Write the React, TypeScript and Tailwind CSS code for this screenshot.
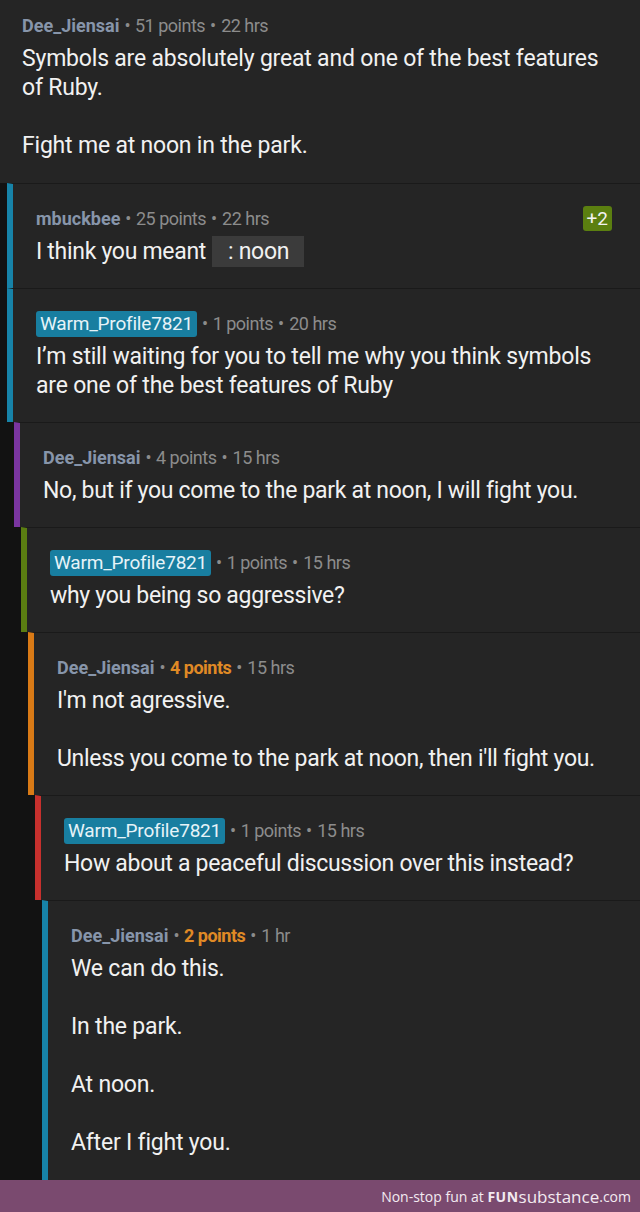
import React from "react";

type Seg = { t: string; code?: boolean };
type C = {
  depth: number;
  name: string;
  badge?: boolean;
  points: string;
  hot?: boolean;
  time: string;
  paras: (string | Seg[])[];
  cond?: boolean;
  tag?: string;
};

const borderCls = [
  "",
  "ml-[7px] border-l-[6px] border-[#1783a8]",
  "ml-[14px] border-l-[6px] border-[#7a35a0]",
  "ml-[21px] border-l-[6px] border-[#5b7e12]",
  "ml-[28px] border-l-[6px] border-[#d97a16]",
  "ml-[35px] border-l-[6px] border-[#c7302d]",
  "ml-[42px] border-l-[6px] border-[#1783a8]",
];

const comments: C[] = [
  {
    depth: 0,
    name: "Dee_Jiensai",
    points: "51 points",
    time: "22 hrs",
    paras: [
      "Symbols are absolutely great and one of the best features of Ruby.",
      "Fight me at noon in the park.",
    ],
  },
  {
    depth: 1,
    name: "mbuckbee",
    points: "25 points",
    time: "22 hrs",
    cond: true,
    tag: "+2",
    paras: [[{ t: "I think you meant" }, { t: ": noon", code: true }]],
  },
  {
    depth: 1,
    name: "Warm_Profile7821",
    badge: true,
    points: "1 points",
    time: "20 hrs",
    paras: [
      "I\u2019m still waiting for you to tell me why you think symbols are one of the best features of Ruby",
    ],
  },
  {
    depth: 2,
    name: "Dee_Jiensai",
    points: "4 points",
    time: "15 hrs",
    cond: true,
    paras: ["No, but if you come to the park at noon, I will fight you."],
  },
  {
    depth: 3,
    name: "Warm_Profile7821",
    badge: true,
    points: "1 points",
    time: "15 hrs",
    cond: true,
    paras: ["why you being so aggressive?"],
  },
  {
    depth: 4,
    name: "Dee_Jiensai",
    points: "4 points",
    hot: true,
    time: "15 hrs",
    cond: true,
    paras: ["I'm not agressive.", "Unless you come to the park at noon, then i'll fight you."],
  },
  {
    depth: 5,
    name: "Warm_Profile7821",
    badge: true,
    points: "1 points",
    time: "15 hrs",
    cond: true,
    paras: ["How about a peaceful discussion over this instead?"],
  },
  {
    depth: 6,
    name: "Dee_Jiensai",
    points: "2 points",
    hot: true,
    time: "1 hr",
    paras: ["We can do this.", "In the park.", "At noon.", "After I fight you."],
  },
];

function Comment({ c }: { c: C }) {
  const pad =
    c.depth === 0 ? "pl-[22px] pt-[14px] pb-[23px]" : "pl-[23px] pt-[23px] pb-[22px]";
  return (
    <div className="flex bg-[#121212]">
      <div
        className={`flex-1 bg-[#252525] ${c.depth === 0 ? "" : "border-t border-t-[#1a1a1a]"} ${borderCls[c.depth]}`}
      >
        <div className={`relative ${pad} pr-[20px]`}>
          <div className="flex items-center h-[24px] text-[18px] leading-[24px] whitespace-nowrap">
            {c.badge ? (
              <span className="bg-[#187ea0] text-[#e6f3f8] rounded-[3px] px-[4px] text-[19px] leading-[26px] tracking-[-0.2px]">
                {c.name}
              </span>
            ) : (
              <span className="font-bold text-[#8795aa]">{c.name}</span>
            )}
            <span className="text-[#8c8c8c] ml-[5px] tracking-[-0.5px]">•</span>
            <span
              className={`ml-[5px] tracking-[-0.5px] ${c.hot ? "text-[#e08a25] font-bold" : "text-[#8c8c8c]"}`}
            >
              {c.points}
            </span>
            <span className="text-[#8c8c8c] ml-[5px]">•</span>
            <span className="text-[#8c8c8c] ml-[5px] tracking-[-0.5px]">{c.time}</span>
          </div>
          {c.tag && (
            <div className="absolute right-[28px] top-[22px] bg-[#5b7f10] text-[#f2f2f2] text-[19px] leading-[25px] px-[4px] rounded-[3px]">
              {c.tag}
            </div>
          )}
          <div
            className={`mt-[6px] text-[23px] leading-[29px] text-[#f1f1f1] flex flex-col gap-[29px] ${c.cond ? "tracking-[-0.3px]" : "tracking-[-0.2px]"}`}
          >
            {c.paras.map((p, i) =>
              typeof p === "string" ? (
                <p key={i}>{p}</p>
              ) : (
                <p key={i} className="flex items-center">
                  {p.map((s, j) =>
                    s.code ? (
                      <span
                        key={j}
                        className="inline-block bg-[#3b3b3b] pl-[16px] pr-[15px] ml-[6px] leading-[31px] -my-[1px] whitespace-pre"
                      >
                        {s.t}
                      </span>
                    ) : (
                      <span key={j}>{s.t}</span>
                    ),
                  )}
                </p>
              ),
            )}
          </div>
        </div>
      </div>
    </div>
  );
}

export default function App() {
  return (
    <div
      className="w-[640px] h-[1212px] bg-[#121212] flex flex-col overflow-hidden"
      style={{ fontFamily: "Roboto, 'Noto Sans', sans-serif" }}
    >
      <div className="flex flex-col flex-1 min-h-0 overflow-hidden">
        {comments.map((c, i) => (
          <Comment key={i} c={c} />
        ))}
        <div className="flex-1 flex">
          <div className="ml-[42px] w-[6px] bg-[#1783a8]" />
          <div className="flex-1 bg-[#252525]" />
        </div>
      </div>
      <div
        className="h-[32px] shrink-0 bg-[#7a4a6f] flex items-center justify-end pr-[9px] text-[#f3eaf1] whitespace-nowrap"
        style={{ fontFamily: "'Open Sans', sans-serif" }}
      >
        <span className="text-[14px]">Non-stop fun at&nbsp;</span>
        <span className="text-[14px] font-bold tracking-[0.5px]">FUN</span>
        <span className="text-[17px] leading-none">substance</span>
        <span className="text-[14px]">.com</span>
      </div>
    </div>
  );
}
